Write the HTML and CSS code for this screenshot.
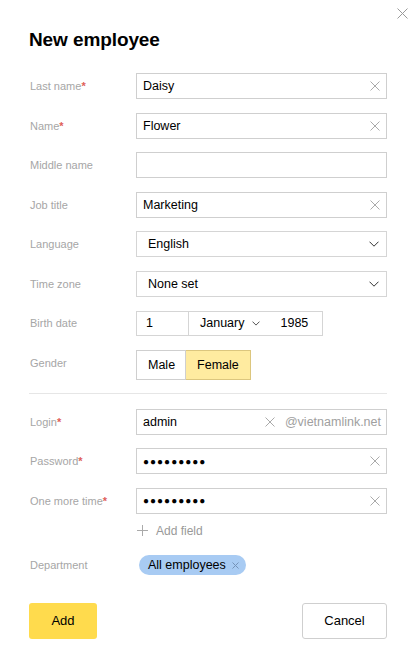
FILE: index.html
```html
<!DOCTYPE html>
<html>
<head>
<meta charset="utf-8">
<link rel="stylesheet" href="styles.css">
</head>
<body>
<div class="panel">
  <button class="close" aria-label="Close">
    <svg width="11" height="11" viewBox="0 0 11 11"><path d="M0.5 0.5L10.5 10.5M10.5 0.5L0.5 10.5" stroke="#9a9a9a" stroke-width="1" fill="none"/></svg>
  </button>
  <h1 class="title">New employee</h1>
  <div class="form">
    <div class="row">
      <div class="label">Last name<span class="req">*</span></div>
      <div class="input"><span class="val">Daisy</span><span class="clear"><svg width="10" height="10" viewBox="0 0 10 10"><path d="M0.5 0.5L9.5 9.5M9.5 0.5L0.5 9.5" stroke="#aaa" fill="none"/></svg></span></div>
    </div>
    <div class="row">
      <div class="label">Name<span class="req">*</span></div>
      <div class="input"><span class="val">Flower</span><span class="clear"><svg width="10" height="10" viewBox="0 0 10 10"><path d="M0.5 0.5L9.5 9.5M9.5 0.5L0.5 9.5" stroke="#aaa" fill="none"/></svg></span></div>
    </div>
    <div class="row">
      <div class="label">Middle name</div>
      <div class="input"><span class="val"></span></div>
    </div>
    <div class="row">
      <div class="label">Job title</div>
      <div class="input"><span class="val">Marketing</span><span class="clear"><svg width="10" height="10" viewBox="0 0 10 10"><path d="M0.5 0.5L9.5 9.5M9.5 0.5L0.5 9.5" stroke="#aaa" fill="none"/></svg></span></div>
    </div>
    <div class="row">
      <div class="label">Language</div>
      <div class="input select"><span class="val">English</span><span class="chev"><svg width="10" height="6" viewBox="0 0 10 6"><path d="M0.5 0.7L5 5.2L9.5 0.7" stroke="#333" stroke-width="1" fill="none"/></svg></span></div>
    </div>
    <div class="row">
      <div class="label">Time zone</div>
      <div class="input select"><span class="val">None set</span><span class="chev"><svg width="10" height="6" viewBox="0 0 10 6"><path d="M0.5 0.7L5 5.2L9.5 0.7" stroke="#333" stroke-width="1" fill="none"/></svg></span></div>
    </div>
    <div class="row">
      <div class="label">Birth date</div>
      <div class="date">
        <div class="day">1</div>
        <div class="monthyear">
          <span class="month">January</span>
          <span class="mchev"><svg width="8" height="5" viewBox="0 0 8 5"><path d="M0.5 0.6L4 4.1L7.5 0.6" stroke="#555" fill="none"/></svg></span>
          <span class="year">1985</span>
        </div>
      </div>
    </div>
    <div class="row row-gender">
      <div class="label label-gender">Gender</div>
      <div class="seg">
        <div class="seg-item">Male</div>
        <div class="seg-item active">Female</div>
      </div>
    </div>
    <div class="divider"></div>
    <div class="row">
      <div class="label">Login<span class="req">*</span></div>
      <div class="input"><span class="val">admin</span><span class="clear"><svg width="10" height="10" viewBox="0 0 10 10"><path d="M0.5 0.5L9.5 9.5M9.5 0.5L0.5 9.5" stroke="#aaa" fill="none"/></svg></span><span class="domain">@vietnamlink.net</span></div>
    </div>
    <div class="row">
      <div class="label">Password<span class="req">*</span></div>
      <div class="input"><span class="val dots">●●●●●●●●●</span><span class="clear"><svg width="10" height="10" viewBox="0 0 10 10"><path d="M0.5 0.5L9.5 9.5M9.5 0.5L0.5 9.5" stroke="#aaa" fill="none"/></svg></span></div>
    </div>
    <div class="row">
      <div class="label">One more time<span class="req">*</span></div>
      <div class="input"><span class="val dots">●●●●●●●●●</span><span class="clear"><svg width="10" height="10" viewBox="0 0 10 10"><path d="M0.5 0.5L9.5 9.5M9.5 0.5L0.5 9.5" stroke="#aaa" fill="none"/></svg></span></div>
    </div>
    <div class="addfield">
      <svg width="11" height="11" viewBox="0 0 11 11"><path d="M5.5 0V11M0 5.5H11" stroke="#aaa" fill="none"/></svg>
      <span>Add field</span>
    </div>
    <div class="row row-dept">
      <div class="label">Department</div>
      <div class="chip">All employees<svg width="7" height="7" viewBox="0 0 7 7"><path d="M0.5 0.5L6.5 6.5M6.5 0.5L0.5 6.5" stroke="#7593b8" fill="none"/></svg></div>
    </div>
  </div>
  <div class="actions">
    <button class="btn btn-add">Add</button>
    <button class="btn btn-cancel">Cancel</button>
  </div>
</div>
</body>
</html>
```
FILE: styles.css
```css
html, body {
  margin: 0;
  padding: 0;
  background: #fff;
}
body {
  font-family: "Liberation Sans", Arial, sans-serif;
  color: #000;
}
.panel {
  position: relative;
  width: 415px;
  height: 648px;
  box-sizing: border-box;
  padding: 28px 28px 0 29px;
}
.close {
  position: absolute;
  top: 8px;
  right: 7px;
  width: 11px;
  height: 11px;
  padding: 0;
  border: 0;
  background: none;
  display: block;
}
.close svg { display: block; }
.title {
  margin: 0 0 21px 0;
  font-size: 19px;
  line-height: 24px;
  font-weight: bold;
  letter-spacing: -0.1px;
}
.form {
  display: flex;
  flex-direction: column;
}
.row {
  display: flex;
  align-items: center;
  height: 26px;
  margin-bottom: 13.5px;
}
.label {
  width: 107px;
  flex: none;
  font-size: 11px;
  color: #a6a6a6;
  padding-left: 1px;
  box-sizing: border-box;
}
.label-gender {
  margin-top: -4px;
}
.req {
  color: #e0605a;
  font-weight: bold;
}
.input {
  flex: 1;
  height: 26px;
  box-sizing: border-box;
  border: 1px solid #cfcfcf;
  display: flex;
  align-items: center;
  padding: 0 6px 0 6px;
  font-size: 12.5px;
}
.val {
  flex: 1;
}
.dots {
  font-size: 10px;
  letter-spacing: 1px;
}
.clear {
  display: flex;
  width: 10px;
  height: 10px;
}
.clear svg, .chev svg, .mchev svg { display: block; }
.domain {
  color: #a0a0a0;
  margin-left: 10px;
  margin-right: -1px;
}
.select {
  padding: 0 7px 0 11px;
  border-color: #d5d5d5;
}
.chev {
  display: flex;
}
.date {
  display: flex;
  height: 25px;
}
.day {
  width: 53px;
  box-sizing: border-box;
  border: 1px solid #d5d5d5;
  font-size: 12.5px;
  display: flex;
  align-items: center;
  padding-left: 9px;
}
.monthyear {
  width: 134px;
  box-sizing: border-box;
  border: 1px solid #d5d5d5;
  border-left: 0;
  display: flex;
  align-items: center;
  font-size: 12.5px;
  padding-left: 11px;
}
.mchev {
  display: flex;
  margin-left: 8px;
  margin-top: 1px;
}
.year {
  margin-left: 20px;
}
.row-gender {
  height: 30px;
  margin-bottom: 13.5px;
}
.seg {
  display: flex;
  height: 30px;
}
.seg-item {
  box-sizing: border-box;
  height: 30px;
  border: 1px solid #cfcfcf;
  display: flex;
  align-items: center;
  font-size: 12.5px;
  padding: 0 10px 0 11px;
}
.seg-item.active {
  background: #ffeba0;
  border-color: #dcc67e;
  border-left: 0;
  padding: 0 11px 0 11px;
}
.divider {
  height: 1px;
  background: #e6e6e6;
  margin-bottom: 14.5px;
}
.addfield {
  display: flex;
  align-items: center;
  height: 20px;
  margin: -6.5px 0 0 107px;
  padding-left: 1px;
  font-size: 12px;
  color: #999;
}
.addfield svg {
  display: block;
  margin-right: 8px;
}
.row-dept {
  height: 21px;
  margin-top: 14px;
  margin-bottom: 0;
}
.chip {
  margin-left: 3px;
  height: 20px;
  box-sizing: border-box;
  background: #a8cbf3;
  border-radius: 10px;
  display: flex;
  align-items: center;
  font-size: 12.5px;
  padding: 0 7px 0 9px;
}
.chip svg {
  display: block;
  margin-left: 6px;
}
.actions {
  display: flex;
  justify-content: space-between;
  margin-top: 27px;
}
.btn {
  height: 36px;
  box-sizing: border-box;
  font-family: "Liberation Sans", Arial, sans-serif;
  font-size: 13px;
  color: #000;
  border-radius: 3px;
  padding: 0;
}
.btn-add {
  width: 68px;
  background: #ffdb4d;
  border: 0;
}
.btn-cancel {
  width: 85px;
  background: #fff;
  border: 1px solid #cfcfcf;
}
```
